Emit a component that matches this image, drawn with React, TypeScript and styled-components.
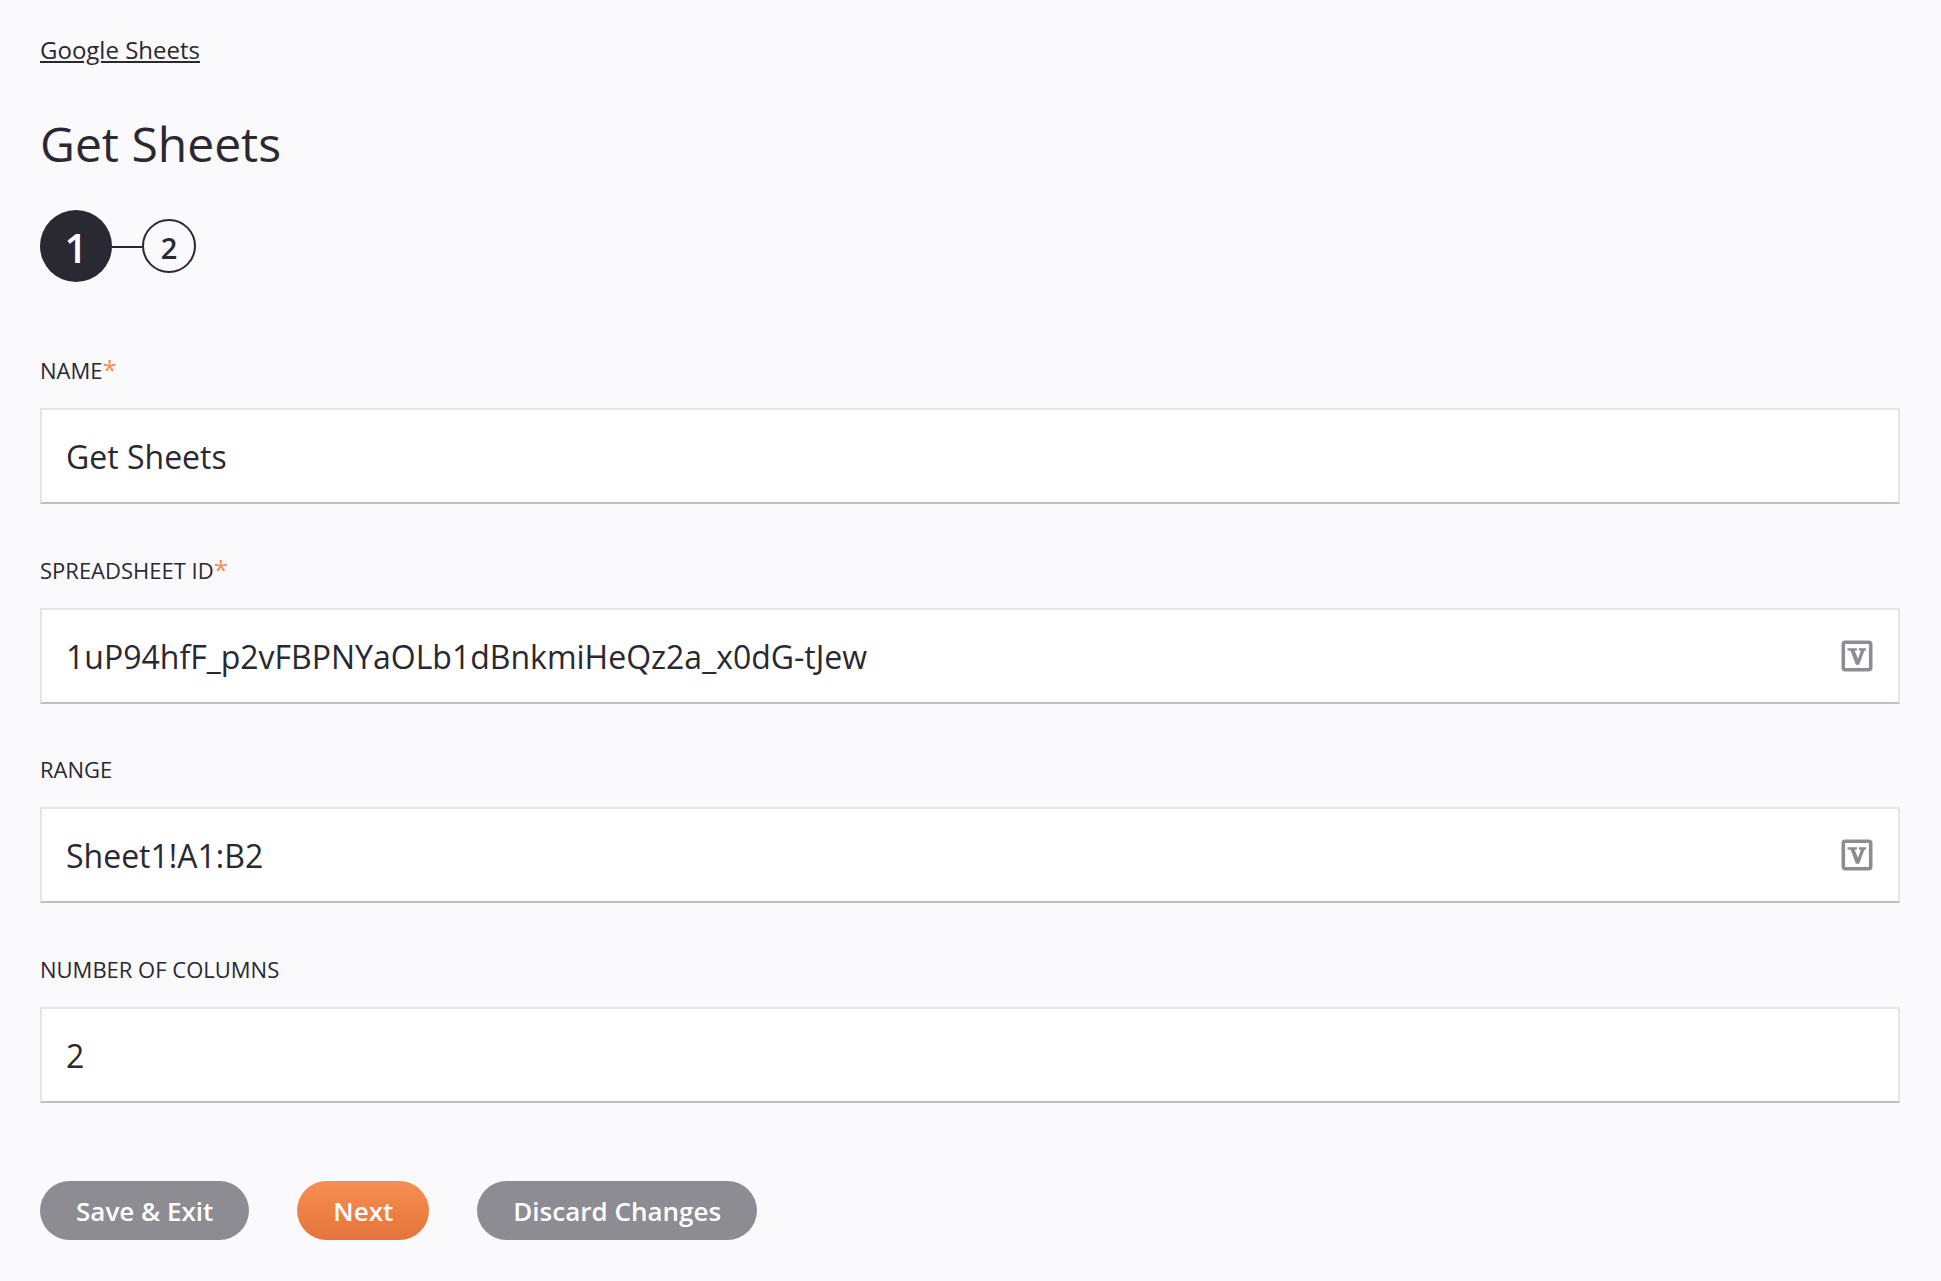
import React from "react";
import styled, { createGlobalStyle } from "styled-components";

const Global = createGlobalStyle`
  html, body { margin: 0; padding: 0; background: #fafafc; }
  body { font-family: "Open Sans", "Liberation Sans", sans-serif; color: #2a2831; }
`;

const Page = styled.main`
  box-sizing: border-box;
  height: 1281px;
  padding: 33px 41px 0 40px;
  display: flex;
  flex-direction: column;
`;

const Breadcrumb = styled.a`
  align-self: flex-start;
  font-size: 24px;
  line-height: 34px;
  color: #2a2831;
  text-decoration: underline;
`;

const Title = styled.h1`
  margin: 45px 0 0;
  font-size: 48px;
  line-height: 64px;
  font-weight: 400;
  color: #2a2831;
`;

const Steps = styled.div`
  display: flex;
  align-items: center;
  margin-top: 34px;
  height: 72px;
`;

const StepCircle = styled.div<{ $active?: boolean }>`
  box-sizing: border-box;
  width: ${(p) => (p.$active ? 72 : 54)}px;
  height: ${(p) => (p.$active ? 72 : 54)}px;
  border-radius: 50%;
  display: flex;
  align-items: center;
  justify-content: center;
  padding-top: 3px;
  font-size: ${(p) => (p.$active ? 40 : 29)}px;
  font-weight: 600;
  background: ${(p) => (p.$active ? "#2a2831" : "transparent")};
  color: ${(p) => (p.$active ? "#fff" : "#2a2831")};
  border: ${(p) => (p.$active ? "none" : "2px solid #2a2831")};
`;

const StepLine = styled.div`
  width: 30px;
  height: 2px;
  margin-top: 2px;
  background: #2a2831;
`;

const Fields = styled.div`
  display: flex;
  flex-direction: column;
  gap: 53px;
  margin-top: 75px;
`;

const Field = styled.div<{ $tight?: boolean }>`
  display: flex;
  flex-direction: column;
  margin-top: ${(p) => (p.$tight ? -1 : 0)}px;
`;

const Label = styled.label<{ $low?: boolean }>`
  font-size: 22px;
  line-height: ${(p) => (p.$low ? 26 : 24)}px;
  height: 28px;
  margin-bottom: 23px;
  color: #2a2831;
`;

const Required = styled.span`
  color: #f68d50;
  font-size: 26px;
`;

const InputBox = styled.div`
  box-sizing: border-box;
  height: 96px;
  display: flex;
  align-items: center;
  justify-content: space-between;
  padding: 0 25px 0 24px;
  background: #fff;
  border: 2px solid #e5e5e8;
  border-bottom-color: #bfbfc3;
  font-size: 32px;
  color: #2a2831;
`;

const Buttons = styled.div`
  display: flex;
  gap: 48px;
  margin-top: 78px;
`;

const Button = styled.button<{ $primary?: boolean }>`
  height: 59px;
  padding: 0 36px;
  border: none;
  border-radius: 30px;
  font-family: inherit;
  font-size: 26px;
  font-weight: 600;
  color: #fff;
  background: ${(p) => (p.$primary ? "linear-gradient(#f88e52, #e4743a)" : "#8e8c93")};
`;

const VIcon = () => (
  <svg width="32" height="32" viewBox="0 0 32 32" aria-hidden="true">
    <rect x="2.3" y="2.3" width="27.4" height="27.4" rx="2" fill="none" stroke="#8e8c93" strokeWidth="3.6" />
    <path
      d="M6.5 8.2h9.4v2.2l-2.2.3 3.3 8 2.9-8-2.1-.3V8.2h7.2v2.2l-1.6.3-5.2 14.1h-3.3L9.6 10.7 6.5 10.4z"
      fill="#8e8c93"
    />
  </svg>
);

export default function App() {
  return (
    <Page>
      <Global />
      <Breadcrumb>Google Sheets</Breadcrumb>
      <Title>Get Sheets</Title>
      <Steps>
        <StepCircle $active>1</StepCircle>
        <StepLine />
        <StepCircle>2</StepCircle>
      </Steps>
      <Fields>
        <Field>
          <Label>NAME<Required>*</Required></Label>
          <InputBox>Get Sheets</InputBox>
        </Field>
        <Field>
          <Label>SPREADSHEET ID<Required>*</Required></Label>
          <InputBox>1uP94hfF_p2vFBPNYaOLb1dBnkmiHeQz2a_x0dG-tJew<VIcon /></InputBox>
        </Field>
        <Field $tight>
          <Label $low>RANGE</Label>
          <InputBox>Sheet1!A1:B2<VIcon /></InputBox>
        </Field>
        <Field>
          <Label $low>NUMBER OF COLUMNS</Label>
          <InputBox>2</InputBox>
        </Field>
      </Fields>
      <Buttons>
        <Button>Save &amp; Exit</Button>
        <Button $primary>Next</Button>
        <Button>Discard Changes</Button>
      </Buttons>
    </Page>
  );
}
